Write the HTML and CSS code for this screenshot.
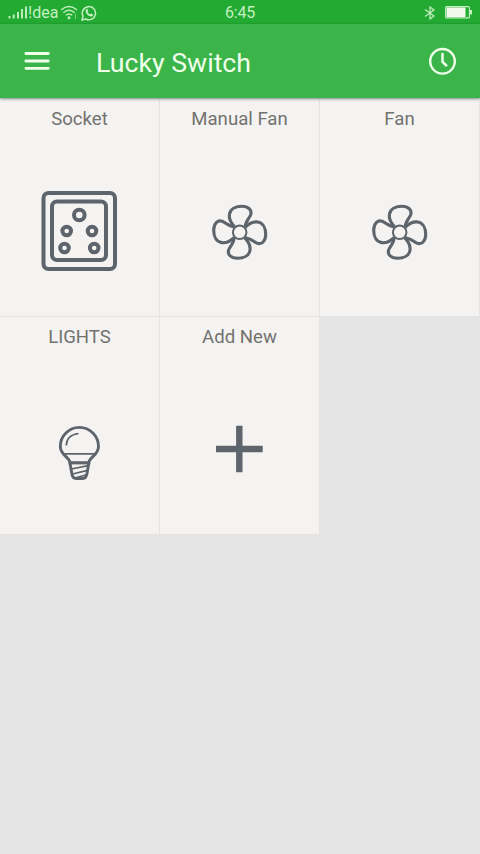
FILE: index.html
```html
<!DOCTYPE html>
<html lang="en">
<head>
<meta charset="utf-8">
<title>Lucky Switch</title>
<link rel="stylesheet" href="styles.css">
</head>
<body>
<div class="status">
  <div class="status-left">
    <svg class="signal" width="21" height="13" viewBox="0 0 21 13"><path d="M1.500 10v2.500M5.700 8.500v4M10 6v6.500M14 3v9.500M18 .5v12" stroke="currentColor" stroke-width="1.900"/></svg>
    <span class="carrier">!dea</span>
    <svg class="wifi" width="18" height="15" viewBox="0 0 18 15" fill="none" stroke="currentColor" stroke-width="1.400"><path d="M1 5Q9-2 17 5M3.300 7.700Q9 2.800 14.700 7.700M5.800 10.300Q9 7.500 12.200 10.300"/><circle cx="9" cy="12.700" r=".8" fill="currentColor"/><path d="M15.500 9v5" stroke-width="1" opacity=".6"/></svg>
    <svg class="chat" width="16" height="16" viewBox="0 0 16 16"><path d="M1 15l1-3.900A6.600 6.600 0 1 1 4.800 14Z" fill="none" stroke="currentColor" stroke-width="1.500"/><path d="M5.300 4.200q1-.8 1.500.3l.5 1.300q0 .5-.8 1.200 1 1.700 2.700 2.300l.9-.9 2 1q.2 1.800-1.900 2.100Q6.200 11 4.700 7 4.200 5.400 5.300 4.200Z" fill="currentColor"/></svg>
  </div>
  <span class="time">6:45</span>
  <div class="status-right">
    <svg width="12" height="14" viewBox="0 0 12 14" fill="none" stroke="currentColor" stroke-width="1.200"><path d="M1 3.500l9 6.500-4 3V1l4 3-9 6.500"/></svg>
    <svg width="28" height="13" viewBox="0 0 28 13"><rect x=".6" y=".6" width="23.800" height="11.300" rx="1" fill="none" stroke="currentColor" stroke-width="1.100"/><path d="M1.500 1.500h19v9.500h-19z" fill="#f0faec"/><path d="M25 4h2v4.500h-2z" fill="currentColor"/></svg>
  </div>
</div>
<header class="appbar">
  <svg class="menu" width="26" height="20" viewBox="0 0 26 20"><path d="M1.900 2.500h22.400M1.900 10h22.400M1.900 17.300h22.400" stroke="currentColor" stroke-width="2.800" stroke-linecap="round"/></svg>
  <h1>Lucky Switch</h1>
  <svg class="clock" width="28" height="28" viewBox="0 0 28 28" fill="none" stroke="currentColor"><circle cx="13.500" cy="14.300" r="12.300" stroke-width="2.400"/><path d="M13.500 7v7.800l3.800 3.700" stroke-width="2.500" stroke-linecap="round" stroke-linejoin="round"/></svg>
</header>
<svg class="defs" width="0" height="0">
  <defs>
    <path id="blade" d="M-5-5.500C-8.500-9-11-13-10.300-18C-9.500-23.300-4-26 2-26C9-26 12.500-22 11-17.500C9.500-13.500 5.500-11 5.500-5"/>
    <g id="fan"><use href="#blade"/><use href="#blade" transform="rotate(90)"/><use href="#blade" transform="rotate(180)"/><use href="#blade" transform="rotate(270)"/><circle r="6.800" stroke-width="2"/></g>
  </defs>
</svg>
<main class="grid">
  <section class="cell">
    <h2>Socket</h2>
    <svg class="icon" width="80" height="84" viewBox="0 0 80 84" stroke-width="4">
      <rect x="4.500" y="4" width="71.500" height="76" rx="5"/><rect x="13" y="12.500" width="54" height="58.500" rx="5"/>
      <circle cx="40.300" cy="26" r="5.300"/><circle cx="27.700" cy="42" r="4.300"/><circle cx="53" cy="42" r="4.300"/><circle cx="25.500" cy="59" r="4.300"/><circle cx="55.200" cy="59" r="4.300"/>
    </svg>
  </section>
  <section class="cell">
    <h2>Manual Fan</h2>
    <svg class="icon" width="80" height="84" viewBox="0 0 80 84" stroke-width="3.100"><use href="#fan" x="40.700" y="43.300"/></svg>
  </section>
  <section class="cell">
    <h2>Fan</h2>
    <svg class="icon" width="80" height="84" viewBox="0 0 80 84" stroke-width="3.100"><use href="#fan" x="40.700" y="43.300"/></svg>
  </section>
  <section class="cell">
    <h2>LIGHTS</h2>
    <svg class="icon" width="80" height="84" viewBox="0 0 80 84" stroke-width="2.900">
      <path d="M31 55.300C30 50 21.300 48 21.300 39.500A19.100 19.100 0 0 1 59.500 39.500C59.500 48 50.800 50 49.800 55.300"/>
      <path d="M29.500 55.800H51.300" stroke-width="3.200"/><path d="M23.800 46.800H57" stroke-width="1.700"/>
      <path d="M27.300 38.500C27.500 32 32 27.500 39.500 26.500" stroke-width="1.700"/>
      <path d="M31 56L32.800 66.500Q33.500 71.500 37 71.500H43.700Q47.200 71.500 48 66.500L49.800 56"/>
      <path d="M32.500 62L49 58.700M33.500 67L48.500 63.300M36 71L47.500 67.700" stroke-width="1.700"/>
    </svg>
  </section>
  <section class="cell">
    <h2>Add New</h2>
    <svg class="icon" width="80" height="84" viewBox="0 0 80 84" stroke-width="6.400"><path d="M17 42H63.700M40.300 18.700V65.300"/></svg>
  </section>
</main>
</body>
</html>
```
FILE: styles.css
```css
* { box-sizing: border-box; }

body {
  margin: 0;
  height: 854px;
  overflow: hidden;
  background: #e4e4e4;
  font-family: Roboto, sans-serif;
}

svg { display: block; }
.defs { position: absolute; }

.status {
  display: grid;
  grid-template-columns: 1fr auto 1fr;
  align-items: center;
  height: 24px;
  padding: 1px 8px 0 8px;
  background: #22aa32;
  color: #c4efc0;
  font-size: 16px;
  line-height: 23px;
}

.time { letter-spacing: -.2px; }
.status-left, .status-right { display: flex; align-items: center; }
.status-right { justify-content: flex-end; gap: 9px; margin-right: -1px; }
.signal { margin-right: -1px; }
.carrier { width: 31px; font-size: 16px; }
.wifi { margin-left: 1px; }
.chat { margin-left: 3px; }

.appbar {
  position: relative;
  display: flex;
  align-items: center;
  height: 74px;
  padding: 0 23px 0 24px;
  background: #3bb54a;
  color: #f0ffea;
  box-shadow: 0 1px 3px rgba(0, 0, 0, .4);
}

.appbar h1 {
  flex: 1;
  margin: 4px 0 0 46px;
  font-size: 26.7px;
  font-weight: 400;
  line-height: 32px;
}

.grid {
  display: grid;
  grid-template-columns: repeat(3, 160px);
  grid-auto-rows: 218px;
  padding-top: 1px;
}

.cell {
  display: flex;
  flex-direction: column;
  align-items: center;
  background: #f4f3f2;
  border-right: 1px solid #e5e4e3;
  border-bottom: 1px solid #e5e4e3;
}

.cell h2 {
  margin: 9px 0 0;
  color: #73726f;
  font-size: 18.6px;
  font-weight: 400;
  line-height: 23px;
}

.icon {
  margin-top: 58px;
  margin-right: 1px;
  fill: none;
  stroke: #5d646b;
}
```
